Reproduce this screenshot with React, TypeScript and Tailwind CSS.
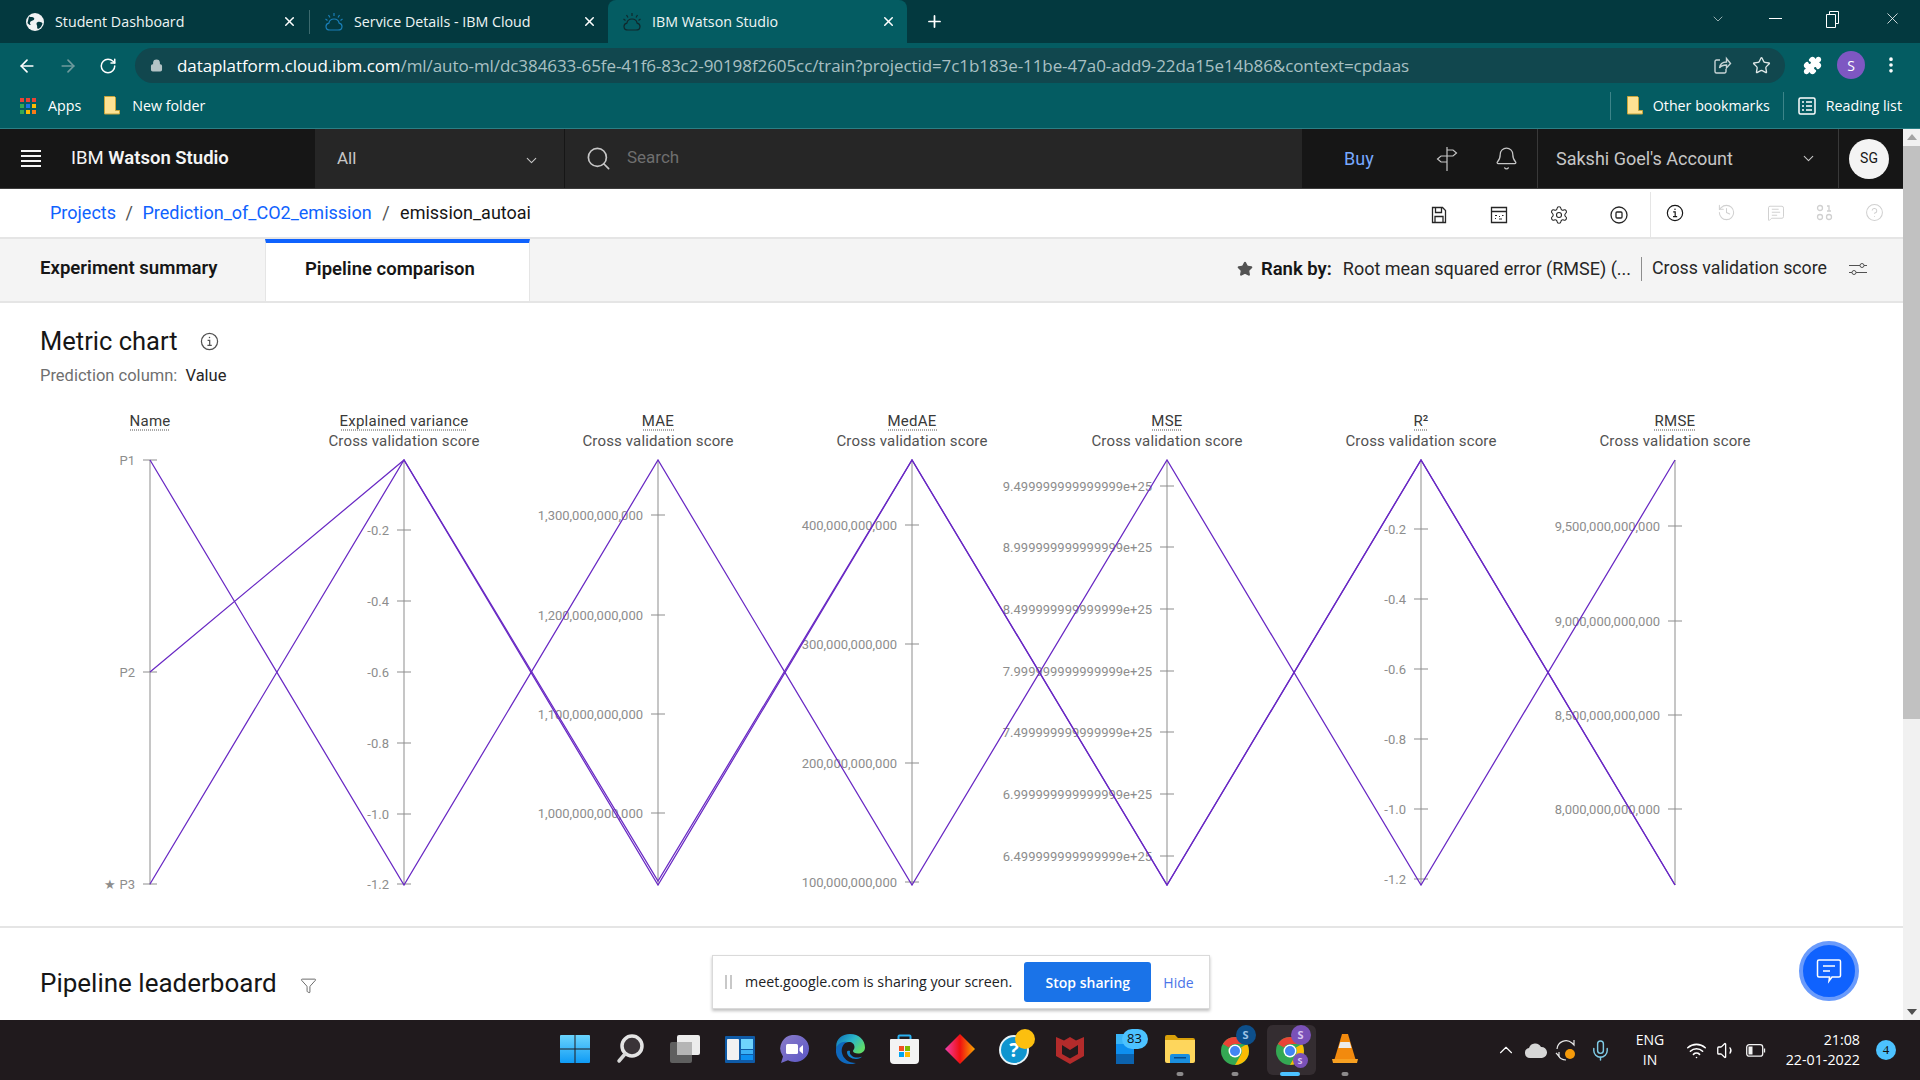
import {
  ArrowLeft,
  ArrowRight,
  Bell,
  ChevronDown,
  ChevronUp,
  CircleHelp,
  Funnel,
  History,
  Lock,
  MessageSquareText,
  Mic,
  MoreVertical,
  Plus,
  Puzzle,
  RotateCw,
  Search,
  Settings,
  Star,
  Volume1,
  Wifi,
  X,
} from 'lucide-react';

const PLEX = "font-['Roboto','Liberation_Sans',sans-serif]";
const CHROME = "font-['Open_Sans','Noto_Sans',sans-serif]";

// ---- chart data, y values are page pixels so they can be read off the screenshot

const AXES = [
  {
    x: 150,
    title: 'Name',
    sub: '',
    ul: [130, 170],
    ticks: [
      [460, 'P1'],
      [672, 'P2'],
      [884, '★ P3'],
    ],
  },
  {
    x: 404,
    title: 'Explained variance',
    sub: 'Cross validation score',
    ul: [341, 466],
    ticks: [
      [530, '-0.2'],
      [601, '-0.4'],
      [672, '-0.6'],
      [743, '-0.8'],
      [814, '-1.0'],
      [884, '-1.2'],
    ],
  },
  {
    x: 658,
    title: 'MAE',
    sub: 'Cross validation score',
    ul: [643, 674],
    ticks: [
      [515, '1,300,000,000,000'],
      [615, '1,200,000,000,000'],
      [714, '1,100,000,000,000'],
      [813, '1,000,000,000,000'],
    ],
  },
  {
    x: 912,
    title: 'MedAE',
    sub: 'Cross validation score',
    ul: [888, 937],
    ticks: [
      [525, '400,000,000,000'],
      [644, '300,000,000,000'],
      [763, '200,000,000,000'],
      [882, '100,000,000,000'],
    ],
  },
  {
    x: 1167,
    title: 'MSE',
    sub: 'Cross validation score',
    ul: [1152, 1181],
    ticks: [
      [486, '9.499999999999999e+25'],
      [547, '8.999999999999999e+25'],
      [609, '8.499999999999999e+25'],
      [671, '7.999999999999999e+25'],
      [732, '7.499999999999999e+25'],
      [794, '6.999999999999999e+25'],
      [856, '6.499999999999999e+25'],
    ],
  },
  {
    x: 1421,
    title: 'R²',
    sub: 'Cross validation score',
    ul: [1414, 1428],
    ticks: [
      [529, '-0.2'],
      [599, '-0.4'],
      [669, '-0.6'],
      [739, '-0.8'],
      [809, '-1.0'],
      [879, '-1.2'],
    ],
  },
  {
    x: 1675,
    title: 'RMSE',
    sub: 'Cross validation score',
    ul: [1654, 1696],
    ticks: [
      [526, '9,500,000,000,000'],
      [621, '9,000,000,000,000'],
      [715, '8,500,000,000,000'],
      [809, '8,000,000,000,000'],
    ],
  },
];

const LINES = [
  [460, 885, 460, 885, 460, 885, 460],
  [672, 460, 885, 460, 885, 460, 885],
  [884, 460, 881, 460, 885, 460, 885],
];

function ParallelChart() {
  return (
    <svg viewBox="0 400 1903 510" className={`block h-[510px] w-[1903px] ${PLEX}`}>
      {AXES.map((a) => (
        <g key={a.title}>
          <text x={a.x} y={426} textAnchor="middle" fontSize={15} fill="#393939" letterSpacing={0.25}>
            {a.title}
          </text>
          <line x1={a.ul[0]} x2={a.ul[1]} y1={430} y2={430} stroke="#525252" strokeDasharray="1 1" />
          <text x={a.x} y={446} textAnchor="middle" fontSize={15} fill="#525252" letterSpacing={0.15}>
            {a.sub}
          </text>
          <line x1={a.x} x2={a.x} y1={460} y2={885} stroke="#8d8d8d" />
          {a.ticks.map(([y, label]) => (
            <g key={label}>
              <line x1={a.x - 7} x2={a.x + 7} y1={y} y2={y} stroke="#8d8d8d" />
              <text x={a.x - 15} y={Number(y) + 4.5} textAnchor="end" fontSize={13} fill="#8d8d8d">
                {label}
              </text>
            </g>
          ))}
        </g>
      ))}
      {LINES.map((l, i) => (
        <polyline
          key={i}
          points={l.map((y, j) => `${AXES[j].x},${y}`).join(' ')}
          fill="none"
          stroke="#6929c4"
          strokeWidth={1.25}
        />
      ))}
    </svg>
  );
}

// ---- browser chrome

function IbmCloudIcon({ color }: { color: string }) {
  return (
    <svg width="20" height="20" viewBox="0 0 20 20" fill="none" stroke={color} strokeWidth="1.2">
      <path d="M6 18h8c2.5 0 4-1.6 4-3.6 0-1.7-1.2-3-2.9-3.3C14.7 8.6 12.600 7 10 7s-4.700 1.600-5.100 4.100C3.200 11.400 2 12.700 2 14.400 2 16.400 3.500 18 6 18z" />
      <path d="M10 1v3M4.500 3l1.500 2.500M15.500 3L14 5.500M1.500 7l2 1.500M18.500 7l-2 1.500" />
    </svg>
  );
}

function Tab({ title, icon, active, width }: { title: string; icon: React.ReactNode; active?: boolean; width: string }) {
  return (
    <div className={`flex h-[43px] items-center rounded-t-lg ${width} ${active ? 'bg-[#045c62]' : ''}`}>
      <span className="ml-[14px] flex w-[20px] justify-center">{icon}</span>
      <span className="ml-[10px] flex-1 truncate text-[14.25px] text-[#eef5f5]">{title}</span>
      <X size={15} strokeWidth={2.4} className="mr-[11px] text-white" />
    </div>
  );
}

function TabStrip() {
  return (
    <div className={`flex h-[43px] items-center bg-[#03393f] ${CHROME}`}>
      <div className="flex h-[43px] w-[309px] items-center">
        <svg width="18" height="18" viewBox="0 0 18 18" className="ml-[26px]">
          <circle cx="9" cy="9" r="9" fill="#f1f3f4" />
          <path d="M3 3.500c2 1 4 0 5 1.500s-1 2.500-2.500 3-2 2-1 3.500-2 0-3-1.500zM12 9c2-.5 4 .5 4.500 1.500-.5 2.500-2.500 5-4.500 5.500-1.500-1-.5-2.500-1-3.500s-1-3 1-3.500z" fill="#03393f" />
        </svg>
        <span className="ml-[11px] flex-1 text-[14.25px] text-[#eef5f5]">Student Dashboard</span>
        <X size={15} strokeWidth={2.4} className="mr-[12px] text-white" />
      </div>
      <div className="h-[24px] w-px bg-[#3c6a6e]" />
      <Tab title="Service Details - IBM Cloud" icon={<IbmCloudIcon color="#1a7fb8" />} width="w-[298px]" />
      <Tab title="IBM Watson Studio" icon={<IbmCloudIcon color="#10282c" />} active width="w-[299px]" />
      <Plus size={19} strokeWidth={2.2} className="ml-[18px] text-white" />
      <div className="mb-[6px] ml-auto flex items-center">
        <ChevronDown size={16} strokeWidth={1} className="mr-[43px] text-[#dfe8e8]" />
        <div className="mr-[44px] h-px w-[13px] bg-white" />
        <svg width="14" height="18" viewBox="0 0 14 18" fill="none" stroke="#fff" className="mr-[43px]">
          <path d="M.5 4.500h9v13h-9zM3.500 4.500v-3h9v12h-3" />
        </svg>
        <X size={19} strokeWidth={1} className="mr-[18px] text-white" />
      </div>
    </div>
  );
}

function Toolbar() {
  return (
    <div className={`flex h-[40px] items-start bg-[#045c62] pt-[5px] ${CHROME}`}>
      <ArrowLeft size={20} strokeWidth={2} className="ml-[17px] mt-[8px] text-white" />
      <ArrowRight size={20} strokeWidth={2} className="ml-[21px] mt-[8px] text-[#6f9a9d]" />
      <RotateCw size={18} strokeWidth={2} className="ml-[21px] mt-[9px] text-white" />
      <div className="ml-[18px] flex h-[35px] w-[1650px] items-center rounded-full bg-[#11474e]">
        <Lock size={13} strokeWidth={2.5} fill="#b5c4c6" className="ml-[15px] text-[#b5c4c6]" />
        <span className="ml-[14px] text-[17px] tracking-[-0.08px] text-[#a9c0c3]">
          <span className="text-white">dataplatform.cloud.ibm.com</span>
          /ml/auto-ml/dc384633-65fe-41f6-83c2-90198f2605cc/train?projectid=7c1b183e-11be-47a0-add9-22da15e14b86&amp;context=cpdaas
        </span>
        <svg width="20" height="20" viewBox="0 0 20 20" fill="none" stroke="#c7d4d5" strokeWidth="1.400" className="ml-auto mr-[20px]">
          <path d="M8 4H4.500A1.500 1.500 0 003 5.500v10A1.500 1.500 0 004.500 17h8a1.500 1.500 0 001.500-1.500V13M7.500 12c.5-4 3-6 7-6V2.500L18.500 7.500l-4 4.500V9c-3 0-5.500.5-7 3z" />
        </svg>
        <Star size={19} strokeWidth={1.700} className="mr-[14px] text-[#dfe8e8]" />
      </div>
      <Puzzle size={19} fill="#fff" className="ml-[18px] mt-[8px] text-white" />
      <div className="ml-[15px] mt-[3px] flex h-[28px] w-[28px] items-center justify-center rounded-full bg-[#7e57c2] text-[14px] text-white">
        S
      </div>
      <MoreVertical size={20} strokeWidth={2.4} className="ml-[16px] mt-[7px] text-white" />
    </div>
  );
}

function BookmarkFolder() {
  return (
    <svg width="16" height="19" viewBox="0 0 16 19">
      <path d="M.5.500h10l1 1v13h4v3.500H.5z" fill="#fde293" stroke="#c8a53a" />
    </svg>
  );
}

function BookmarksBar() {
  const cols = ['#ea4335', '#ea4335', '#ea4335', '#34a853', '#1a73e8', '#fbbc04', '#34a853', '#fbbc04', '#fa7b17'];
  return (
    <div className={`flex h-[46px] items-center border-b border-[#2b7f85] bg-[#045c62] text-[14.25px] text-white ${CHROME}`}>
      <div className="ml-[20px] grid grid-cols-3 gap-[2px]">
        {cols.map((c, i) => (
          <div key={i} className="h-[4px] w-[4px]" style={{ background: c }} />
        ))}
      </div>
      <span className="ml-[12px]">Apps</span>
      <div className="ml-[23px] flex">
        <BookmarkFolder />
      </div>
      <span className="ml-[12px]">New folder</span>
      <div className="ml-auto h-[28px] w-px bg-[#3d8489]" />
      <div className="ml-[16px] flex">
        <BookmarkFolder />
      </div>
      <span className="ml-[10px]">Other bookmarks</span>
      <div className="ml-[13px] h-[28px] w-px bg-[#3d8489]" />
      <svg width="18" height="18" viewBox="0 0 18 18" fill="none" stroke="#fff" strokeWidth="1.500" className="ml-[14px]">
        <rect x="1" y="1" width="16" height="16" rx="1.500" />
        <path d="M4 5h2M8 5h6M4 9h2M8 9h6M4 13h2M8 13h6" />
      </svg>
      <span className="ml-[10px] mr-[18px]">Reading list</span>
    </div>
  );
}

// ---- watson studio

function AppHeader() {
  return (
    <div className={`flex h-[60px] border-b border-[#3d3d3d] bg-[#161616] ${PLEX}`}>
      <div className="flex w-[315px] items-center">
        <div className="ml-[21px] flex w-[20px] flex-col gap-[3px]">
          <div className="h-[2px] bg-[#f4f4f4]" />
          <div className="h-[2px] bg-[#f4f4f4]" />
          <div className="h-[2px] bg-[#f4f4f4]" />
          <div className="h-[2px] bg-[#f4f4f4]" />
        </div>
        <span className="ml-[30px] text-[18.5px] text-[#f4f4f4]">
          IBM <span className="font-semibold">Watson Studio</span>
        </span>
      </div>
      <div className="flex w-[250px] items-center border-r border-[#161616] bg-[#262626] text-[#c6c6c6]">
        <span className="ml-[22px] text-[17px]">All</span>
        <ChevronDown size={17} strokeWidth={1.500} className="ml-auto mr-[24px] mt-[3px]" />
      </div>
      <div className="flex w-[737px] items-center bg-[#262626]">
        <Search size={27} strokeWidth={1.500} className="ml-[20px] text-[#c6c6c6]" />
        <span className="ml-[15px] pb-[1px] text-[17px] text-[#6f6f6f]">Search</span>
      </div>
      <div className="flex w-[235px] items-center">
        <span className="ml-[42px] pb-[1px] text-[18px] text-[#78a9ff]">Buy</span>
        <svg width="24" height="26" viewBox="0 0 24 26" fill="none" stroke="#c6c6c6" strokeWidth="1.200" className="ml-[61px]">
          <path d="M12 1v24M12 4h6l3.500 3-3.500 3h-6M12 10H6l-3.500 3L6 16h6" />
        </svg>
        <Bell size={25} strokeWidth={1.200} className="ml-[35px] text-[#c6c6c6]" />
      </div>
      <div className="flex w-[302px] items-center border-l border-r border-[#393939] text-[#c6c6c6]">
        <span className="ml-[18px] text-[18px]">Sakshi Goel's Account</span>
        <ChevronDown size={17} strokeWidth={1.500} className="ml-auto mr-[21px]" />
      </div>
      <div className="flex flex-1 items-center justify-center pr-[4px]">
        <div className="flex h-[40px] w-[40px] items-center justify-center rounded-full bg-[#f4f4f4] text-[14px] text-[#161616]">
          SG
        </div>
      </div>
    </div>
  );
}

function InfoIcon({ size = 20, color = '#161616' }: { size?: number; color?: string }) {
  return (
    <svg width={size} height={size} viewBox="0 0 20 20" fill="none" stroke={color} strokeWidth="1.300">
      <circle cx="10" cy="10" r="8.500" />
      <path d="M8 8.800h2.200v5.200M7.800 14h4.600" />
      <circle cx="10" cy="5.800" r="0.800" fill={color} stroke="none" />
    </svg>
  );
}

function BreadcrumbBar() {
  return (
    <div className={`flex h-[50px] items-center border-b-2 border-[#e5e5e5] bg-white ${PLEX}`}>
      <div className="ml-[50px] flex items-center pb-[2px] text-[18px]">
        <span className="text-[#0f62fe]">Projects</span>
        <span className="mx-[9.5px] text-[#525252]">/</span>
        <span className="text-[#0f62fe]">Prediction_of_CO2_emission</span>
        <span className="mx-[10.5px] text-[#525252]">/</span>
        <span className="text-[#161616]">emission_autoai</span>
      </div>
      <div className="ml-auto flex h-full items-center pt-[3px] text-[#262626]">
        <svg width="18" height="18" viewBox="0 0 18 18" fill="none" stroke="#262626" strokeWidth="1.300" className="mr-[42px]">
          <path d="M2.500 1.500h10l3 3v12h-13zM5.500 1.500v5h6v-5M5 16.500v-6h8v6" />
        </svg>
        <svg width="18" height="18" viewBox="0 0 18 18" fill="none" stroke="#262626" strokeWidth="1.300" className="mr-[41px]">
          <path d="M1.500 1.500h15v15h-15zM1.500 5.500h15" />
          <path d="M5 9.500h2M5 12.500h1M9 10.500h1M9 13h3M12 9.500h1.500" strokeWidth="1" />
        </svg>
        <Settings size={20} strokeWidth={1.300} className="mr-[41px]" />
        <svg width="18" height="18" viewBox="0 0 18 18" fill="none" stroke="#262626" strokeWidth="1.300" className="mr-[22px]">
          <circle cx="9" cy="9" r="8" />
          <rect x="6" y="6" width="6" height="6" rx="1" />
        </svg>
        <div className="flex h-full items-center border-l border-[#e5e5e5] pb-[4px]">
          <span className="ml-[15px] mr-[33px] flex">
            <InfoIcon size={18} />
          </span>
          <History size={19} strokeWidth={1.300} className="mr-[31px] text-[#d0d0d0]" />
          <MessageSquareText size={18} strokeWidth={1.300} className="mr-[31px] text-[#d0d0d0]" />
          <svg width="17" height="17" viewBox="0 0 17 17" fill="none" stroke="#d0d0d0" strokeWidth="1.300" className="mr-[32px]">
            <circle cx="4" cy="4" r="2.500" />
            <circle cx="4" cy="13" r="2.500" />
            <circle cx="13" cy="13" r="2.500" />
            <path d="M11 2h2v5M11 7h4" />
          </svg>
          <CircleHelp size={19} strokeWidth={1.300} className="mr-[19px] text-[#d0d0d0]" />
        </div>
      </div>
    </div>
  );
}

function TabsBar() {
  return (
    <div className={`flex h-[64px] border-b-2 border-[#e5e5e5] bg-[#f4f4f4] ${PLEX}`}>
      <div className="flex w-[265px] items-center pl-[40px] pb-[2px] text-[18.6px] font-semibold text-[#161616]">
        Experiment summary
      </div>
      <div className="flex w-[265px] items-center border-x border-t-[4px] border-x-[#e5e5e5] border-t-[#0f62fe] bg-white pb-[5px] pl-[39px] text-[18.5px] font-semibold text-[#161616]">
        Pipeline comparison
      </div>
      <div className="ml-auto flex items-center pb-[2px] text-[#262626]">
        <Star size={16} fill="#525252" className="mr-[8px] text-[#525252]" />
        <span className="mr-[11px] mt-[2px] text-[18.5px] font-semibold text-[#161616]">Rank by:</span>
        <span className="pb-[2px] text-[18px]">Root mean squared error (RMSE) (...</span>
        <div className="mx-[10px] h-[24px] w-px bg-[#8d8d8d]" />
        <span className="pb-[2px] text-[17.75px]">Cross validation score</span>
        <svg width="20" height="16" viewBox="0 0 20 16" fill="none" stroke="#525252" className="ml-[21px] mr-[35px]">
          <path d="M1 4.500h11M16 4.500h3M1 11.500h3M8 11.500h11" />
          <circle cx="14" cy="4.500" r="2" />
          <circle cx="6" cy="11.500" r="2" />
        </svg>
      </div>
    </div>
  );
}

function MetricSection() {
  return (
    <section className={`h-[625px] border-b-2 border-[#e5e5e5] bg-white ${PLEX}`}>
      <div className="flex items-center pl-[40px] pt-[22px]">
        <h2 className="text-[25.5px] leading-[32px] text-[#161616]">Metric chart</h2>
        <span className="ml-[22px] flex">
          <InfoIcon size={19} color="#525252" />
        </span>
      </div>
      <p className="ml-[40px] mt-[9px] text-[16.5px] leading-[20px] text-[#6f6f6f]">
        Prediction column:&nbsp; <span className="text-[#262626]">Value</span>
      </p>
      <div className="mt-[14px]">
        <ParallelChart />
      </div>
    </section>
  );
}

function LeaderboardHead() {
  return (
    <div className={`flex items-center bg-white pl-[40px] pt-[39px] ${PLEX}`}>
      <h2 className="text-[26px] leading-[32px] text-[#161616]">Pipeline leaderboard</h2>
      <Funnel size={17} strokeWidth={1.200} className="ml-[23px] mt-[5px] text-[#525252]" />
    </div>
  );
}

function ShareBar() {
  return (
    <div className={`absolute left-[712px] top-[826px] flex h-[54px] w-[498px] items-center border border-[#dadada] bg-white shadow-[0_2px_3px_rgba(0,0,0,0.25)] ${CHROME}`}>
      <div className="ml-[12px] h-[14px] w-[7px] border-x-2 border-[#c8c8c8]" />
      <span className="ml-[13px] text-[14.25px] text-[#202124]">meet.google.com is sharing your screen.</span>
      <button className="ml-[12px] h-[40px] w-[127px] rounded-[3px] bg-[#1a73e8] text-[14px] font-semibold text-white">
        Stop sharing
      </button>
      <span className="ml-[12px] text-[14px] text-[#4b74e8]">Hide</span>
    </div>
  );
}

function ChatButton() {
  return (
    <div className="absolute left-[1799px] top-[812px] flex h-[60px] w-[60px] items-center justify-center rounded-full border-[4px] border-[#6a9bfb] bg-[#0f62fe]">
      <svg width="26" height="26" viewBox="0 0 26 26" fill="none" stroke="#fff" strokeWidth="1.500">
        <path d="M3 2h20a1.500 1.500 0 011.500 1.500v14a1.500 1.500 0 01-1.500 1.500h-7l-3 4 .5-4H3a1.500 1.500 0 01-1.500-1.500v-14A1.500 1.500 0 013 2z" />
        <path d="M7 8h12M7 13h7" />
      </svg>
    </div>
  );
}

function Scrollbar() {
  return (
    <div className="flex w-[17px] flex-col items-center bg-[#f1f1f1]">
      <div className="mt-[5px] h-0 w-0 border-x-[5px] border-b-[6px] border-x-transparent border-b-[#a3a3a3]" />
      <div className="mt-[6px] h-[573px] w-full bg-[#c1c1c1]" />
      <div className="mb-[5px] mt-auto h-0 w-0 border-x-[5px] border-t-[6px] border-x-transparent border-t-[#505050]" />
    </div>
  );
}

// ---- windows taskbar

function Dot({ active }: { active?: boolean }) {
  return (
    <div className={`absolute bottom-[4px] left-1/2 h-[4px] -translate-x-1/2 rounded-full ${active ? 'w-[20px] bg-[#4cc2ff]' : 'w-[7px] bg-[#8c8a8b]'}`} />
  );
}

function TaskIcon({ children, dot, active }: { children: React.ReactNode; dot?: boolean; active?: boolean }) {
  return (
    <div className="relative flex h-[60px] w-[55px] items-center justify-center pb-[2px]">
      {active && <div className="absolute left-[5px] top-[5px] h-[50px] w-[49px] rounded-md bg-[#342d31]" />}
      <div className="relative flex">{children}</div>
      {dot && <Dot active={active} />}
    </div>
  );
}

function ChromeGlyph({ size = 28 }: { size?: number }) {
  return (
    <svg width={size} height={size} viewBox="0 0 28 28">
      <circle cx="14" cy="14" r="14" fill="#34a853" />
      <path d="M14 0a14 14 0 0112.100 7H14a7 7 0 00-6.100 3.500L1.900 7A14 14 0 0114 0z" fill="#ea4335" />
      <path d="M26.100 7A14 14 0 0114 28l6-10.500A7 7 0 0020 10.500z" fill="#fbbc04" />
      <circle cx="14" cy="14" r="6.500" fill="#fff" />
      <circle cx="14" cy="14" r="5" fill="#4285f4" />
    </svg>
  );
}

function Taskbar() {
  return (
    <div className="flex h-[60px] items-center bg-[#201a1d] font-['Open_Sans','Noto_Sans',sans-serif] text-white">
      <div className="ml-[547px] flex">
        <TaskIcon>
          <svg width="30" height="30" viewBox="0 0 30 30">
            <defs>
              <linearGradient id="win" x1="0" y1="0" x2="0" y2="1">
                <stop offset="0" stopColor="#6ad4fd" />
                <stop offset="1" stopColor="#0f9bf5" />
              </linearGradient>
            </defs>
            <path d="M1 1h13.500v13.500H0V2a1 1 0 011-1zM15.500 1H29a1 1 0 011 1v12.500H15.500zM0 15.500h14.500V29H1a1 1 0 01-1-1zM15.500 15.500H30V28a1 1 0 01-1 1H15.500z" fill="url(#win)" />
          </svg>
        </TaskIcon>
        <TaskIcon>
          <svg width="28" height="30" viewBox="0 0 28 30" fill="none">
            <circle cx="16" cy="12" r="10" stroke="#e4e4e4" strokeWidth="3.500" fill="#3a3438" />
            <path d="M9 20l-6 7" stroke="#d8d8d8" strokeWidth="3.500" strokeLinecap="round" />
          </svg>
        </TaskIcon>
        <TaskIcon>
          <svg width="30" height="28" viewBox="0 0 30 28">
            <rect x="0" y="7" width="22" height="21" rx="2" fill="#5f5f5f" />
            <rect x="7" y="0" width="23" height="20" rx="2" fill="#ececec" />
            <rect x="7" y="7" width="15" height="13" fill="#b5b5b5" />
          </svg>
        </TaskIcon>
        <TaskIcon>
          <svg width="30" height="27" viewBox="0 0 30 27">
            <rect width="30" height="27" rx="1" fill="#0f5ba7" />
            <rect x="2" y="3" width="12" height="21" rx="1" fill="#f2f2f2" />
            <rect x="16" y="3" width="12" height="10" fill="#6fd3fc" />
            <rect x="16" y="14" width="12" height="4" fill="#3bb0f5" />
            <rect x="16" y="19" width="12" height="5" fill="#0d8fef" />
          </svg>
        </TaskIcon>
        <TaskIcon>
          <svg width="29" height="29" viewBox="0 0 29 29">
            <defs>
              <linearGradient id="teams" x1="0" y1="0" x2="1" y2="1">
                <stop offset="0" stopColor="#8a7cc9" />
                <stop offset="1" stopColor="#5a56c6" />
              </linearGradient>
            </defs>
            <path d="M15 0a14 13.500 0 110 27c-2.500 0-5-.600-7-1.700L1 28l2-6.500A13.500 13.500 0 0115 0z" fill="url(#teams)" />
            <rect x="6" y="9" width="12" height="10" rx="1.500" fill="#fff" />
            <path d="M19.500 13l3.500-3v9l-3.500-3z" fill="#fff" />
          </svg>
        </TaskIcon>
        <TaskIcon>
          <svg width="30" height="30" viewBox="0 0 30 30">
            <defs>
              <linearGradient id="edge" x1="0" y1="0" x2="1" y2="0.600">
                <stop offset="0" stopColor="#0c6bb8" />
                <stop offset="0.550" stopColor="#2bb6c9" />
                <stop offset="1" stopColor="#5fdc6a" />
              </linearGradient>
            </defs>
            <path d="M15 0c9 0 15 6 15 13.500 0 4-3.500 6-7 6-3 0-5-1-5-2.500 0-1 1.500-1.500 1.500-4C19.500 10 17 8 14 8 8 8 4 12 2 16-1 8 5 0 15 0z" fill="url(#edge)" />
            <path d="M1 15c1-5 6-8 11-7-4 2-6 6-5 11s6 10 14 10c-2 1-4 1-6 1C7 30 0 24 1 15z" fill="#0f68bd" />
            <path d="M12 18c0 4 4 7 9 7 3 0 5-1 6-2.500-2 1-7 2-10-.5-2-1.500-2.500-3-2-5-1.500-.5-3 0-3 1z" fill="#1283cf" />
          </svg>
        </TaskIcon>
        <TaskIcon>
          <svg width="29" height="30" viewBox="0 0 29 30">
            <path d="M8.500 6V2.500a1 1 0 011-1h10a1 1 0 011 1V6" stroke="#2ab0f0" strokeWidth="2" fill="none" />
            <path d="M1 5h27a1 1 0 011 1v20a4 4 0 01-4 4H4a4 4 0 01-4-4V6a1 1 0 011-1z" fill="#f3f3f3" />
            <rect x="9" y="12" width="5" height="5" fill="#f25022" />
            <rect x="15" y="12" width="5" height="5" fill="#7fba00" />
            <rect x="9" y="18" width="5" height="5" fill="#00a4ef" />
            <rect x="15" y="18" width="5" height="5" fill="#ffb900" />
          </svg>
        </TaskIcon>
        <TaskIcon>
          <svg width="30" height="30" viewBox="0 0 30 30">
            <defs>
              <linearGradient id="dia" x1="0" y1="0" x2="1" y2="0">
                <stop offset="0" stopColor="#ee3fae" />
                <stop offset="0.500" stopColor="#f01010" />
                <stop offset="1" stopColor="#f9a800" />
              </linearGradient>
            </defs>
            <path d="M15 0l15 15-15 15L0 15z" fill="url(#dia)" />
          </svg>
        </TaskIcon>
        <TaskIcon>
          <svg width="36" height="36" viewBox="0 0 36 36" className="-mr-[4px] -mt-[4px]">
            <circle cx="15" cy="21" r="14" fill="#0f95cf" stroke="#e8f4f8" strokeWidth="2" />
            <text x="15" y="28" textAnchor="middle" fontSize="20" fontWeight="700" fill="#fff">?</text>
            <circle cx="26" cy="10" r="10" fill="#fcbf0f" />
          </svg>
        </TaskIcon>
        <TaskIcon>
          <svg width="28" height="30" viewBox="0 0 28 30">
            <path fillRule="evenodd" d="M0 3l8 3.500L14 3l6 3.500L28 3v19l-14 8-14-8zM6 11v9l8 4.500 8-4.500v-9l-8 5z" fill="#b32b2b" />
          </svg>
        </TaskIcon>
        <TaskIcon>
          <div className="flex">
            <svg width="18" height="30" viewBox="0 0 18 30">
              <path d="M3 0h15v30H3a3 3 0 01-3-3V3a3 3 0 013-3z" fill="#0d8fef" />
              <rect y="0" width="18" height="10" fill="#39b5f7" />
              <rect y="20" width="18" height="10" fill="#0c62ad" />
            </svg>
            <div className="absolute -right-[14px] -top-[5px] flex h-[20px] w-[26px] items-center justify-center rounded-full bg-[#4cc2ff] text-[13px] text-[#111]">
              83
            </div>
          </div>
        </TaskIcon>
        <TaskIcon dot>
          <svg width="30" height="28" viewBox="0 0 30 28">
            <path d="M0 2a2 2 0 012-2h8l3 3h15a2 2 0 012 2v4H0z" fill="#d9a00a" />
            <path d="M0 5h30v21a2 2 0 01-2 2H2a2 2 0 01-2-2z" fill="#fed65c" />
            <path d="M5 28v-7a2 2 0 012-2h16a2 2 0 012 2v7z" fill="#1b8fdf" />
            <rect x="9" y="22" width="12" height="1.500" fill="#0a4b86" />
          </svg>
        </TaskIcon>
        <TaskIcon dot>
          <div className="mt-[4px] flex">
            <ChromeGlyph />
            <div className="absolute -right-[7px] -top-[8px] flex h-[20px] w-[20px] items-center justify-center rounded-full bg-[#0d4f8b] text-[11px] font-bold text-[#9fc4e6]">
              S
            </div>
          </div>
        </TaskIcon>
        <TaskIcon dot active>
          <div className="mt-[4px] flex">
            <ChromeGlyph />
            <div className="absolute -right-[7px] -top-[8px] flex h-[20px] w-[20px] items-center justify-center rounded-full bg-[#7a51b8] text-[11px] font-bold text-[#d9c8f0]">
              S
            </div>
            <div className="absolute -right-[4px] bottom-[-3px] flex h-[15px] w-[15px] items-center justify-center rounded-full bg-[#7a51b8] text-[9px] font-bold text-[#d9c8f0]">
              S
            </div>
          </div>
        </TaskIcon>
        <TaskIcon dot>
          <svg width="26" height="30" viewBox="0 0 26 30">
            <path d="M10 0h6l8 27H2z" fill="#f28a0e" />
            <path d="M8.300 8h9.400l1.800 6H6.500z" fill="#ececec" />
            <path d="M0 25h26l-1 4H1z" fill="#f7a021" />
          </svg>
        </TaskIcon>
      </div>

      <ChevronUp size={22} strokeWidth={1.200} className="ml-[123px]" />
      <svg width="22" height="15" viewBox="0 0 22 15" className="ml-[8px]">
        <path d="M5 15a5 5 0 01-1-9.900A6.500 6.500 0 0116 4a5 5 0 011 11z" fill="#d6d6d6" />
      </svg>
      <svg width="22" height="24" viewBox="0 0 22 24" fill="none" stroke="#e8e8e8" strokeWidth="1.200" className="ml-[8px]">
        <path d="M2 11a9 9 0 0115-6l2 2V2M1 15l3 3v-4" />
        <path d="M3 17a9 9 0 008 5" />
        <circle cx="15" cy="16" r="5" fill="#f59a0a" stroke="none" />
      </svg>
      <Mic size={23} strokeWidth={1.500} className="ml-[12px] text-[#7fcbe6]" />
      <div className="ml-[14px] flex w-[48px] flex-col items-center text-[14px] leading-[20px]">
        <span>ENG</span>
        <span>IN</span>
      </div>
      <Wifi size={21} strokeWidth={1.800} className="ml-[12px]" />
      <Volume1 size={21} strokeWidth={1.500} className="ml-[9px]" />
      <svg width="20" height="13" viewBox="0 0 20 13" fill="none" stroke="#f2f2f2" strokeWidth="1.300" className="ml-[9px]">
        <rect x="0.700" y="0.700" width="16" height="11.500" rx="2.500" />
        <rect x="2.500" y="2.500" width="4" height="8" fill="#f2f2f2" stroke="none" />
        <path d="M18.500 4.500v4" />
      </svg>
      <div className="ml-[18px] flex w-[76px] flex-col items-end text-[14.25px] leading-[20px]">
        <span>21:08</span>
        <span>22-01-2022</span>
      </div>
      <div className="ml-[16px] flex h-[20px] w-[20px] items-center justify-center rounded-full bg-[#4cc2ff] font-['Liberation_Serif',serif] text-[13px] text-[#111]">
        4
      </div>
    </div>
  );
}

export default function App() {
  return (
    <div className="flex h-[1080px] w-[1920px] flex-col overflow-hidden bg-white">
      <TabStrip />
      <Toolbar />
      <BookmarksBar />
      <div className="flex h-[891px] overflow-hidden">
        <main className="relative w-[1903px] overflow-hidden">
          <AppHeader />
          <BreadcrumbBar />
          <TabsBar />
          <MetricSection />
          <LeaderboardHead />
          <ShareBar />
          <ChatButton />
        </main>
        <Scrollbar />
      </div>
      <Taskbar />
    </div>
  );
}
